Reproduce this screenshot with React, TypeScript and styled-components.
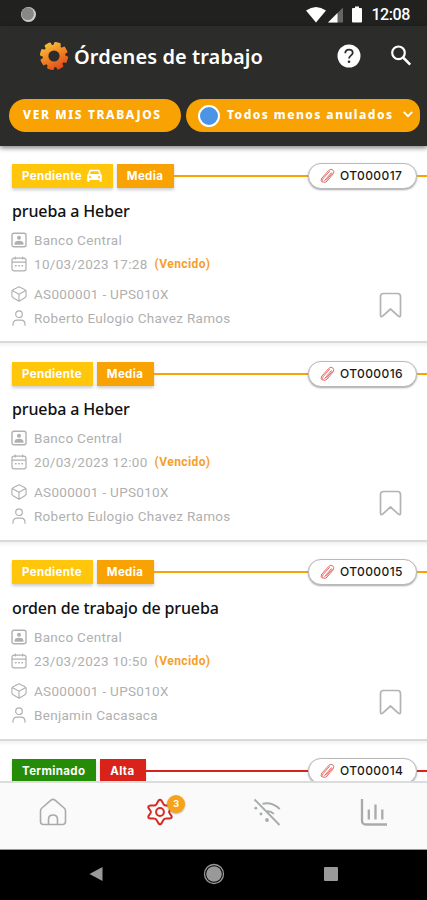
import React from "react";
import styled, { createGlobalStyle } from "styled-components";

const GlobalStyle = createGlobalStyle`
  * { box-sizing: border-box; }
  body { margin: 0; background: #fff; font-family: Roboto, sans-serif; }
  svg { display: block; flex: none; }
`;

const Screen = styled.div`
  width: 427px;
  height: 900px;
  display: flex;
  flex-direction: column;
  overflow: hidden;
  background: #fff;
`;

const StatusBar = styled.div`
  height: 26px;
  flex: none;
  background: #212120;
  display: flex;
  align-items: center;
  padding: 3px 17px 0 20px;
  color: #fff;
`;

const Clock = styled.span`
  margin-left: 8px;
  font: 500 16px/20px Roboto, sans-serif;
  letter-spacing: -0.4px;
`;

const Spacer = styled.div`
  flex: 1;
`;

const Header = styled.header`
  position: relative;
  z-index: 1;
  height: 120px;
  flex: none;
  background: #2c2c2a;
  box-shadow: 0 2px 5px rgba(0, 0, 0, 0.45);
`;

const TitleRow = styled.div`
  height: 60px;
  display: flex;
  align-items: center;
  padding: 0 14px 0 39px;
`;

const Title = styled.h1`
  margin: 2px 0 0 5px;
  color: #fff;
  font: 600 20px/28px "Noto Sans", sans-serif;
  letter-spacing: 0.08px;
  white-space: nowrap;
`;

const HeaderActions = styled.div`
  display: flex;
  align-items: center;
  gap: 28px;
`;

const FilterRow = styled.div`
  display: flex;
  gap: 5px;
  padding: 13px 7px 0 9px;
`;

const FilterButton = styled.button<{ $width: number; $heading?: boolean }>`
  width: ${(p) => p.$width}px;
  height: 33px;
  flex: none;
  display: flex;
  align-items: center;
  border: 0;
  border-radius: ${(p) => (p.$heading ? "17px" : "17px 14px 14px 17px")};
  background: #f9a203;
  color: #fff;
  padding: 0 ${(p) => (p.$heading ? 14 : 7)}px 2px ${(p) => (p.$heading ? 14 : 11)}px;
  font: 800 12px/16px "Noto Sans", sans-serif;
  letter-spacing: ${(p) => (p.$heading ? 1.6 : 1.45)}px;
  white-space: nowrap;
`;

const ColorDot = styled.i`
  width: 22px;
  height: 22px;
  flex: none;
  margin: 3px 7px 0 1px;
  border: 2px solid #fff;
  border-radius: 50%;
  background: #4b94e6;
`;

const List = styled.main`
  height: 635px;
  flex: none;
  overflow: hidden;
  background: #fff;
`;

const Card = styled.article`
  height: 198.6px;
  padding-top: 18px;
  border-bottom: 2px solid #d9d9d9;
  background: linear-gradient(#f2f2f2, #fff 5px);
  &:first-child {
    height: 197.4px;
    padding-top: 17px;
  }
`;

const TagRow = styled.div`
  height: 25px;
  display: flex;
  align-items: center;
  padding-left: 12px;
`;

const Tag = styled.span<{ $color: string; $gap?: number }>`
  height: 24px;
  display: flex;
  align-items: center;
  gap: 5px;
  padding: 0 11px 0 10px;
  margin-right: ${(p) => p.$gap ?? 0}px;
  background: ${(p) => p.$color};
  color: #fff;
  font: 700 11.5px/16px Inter, sans-serif;
  letter-spacing: 0.35px;
  box-shadow: 0 2px 3px rgba(0, 0, 0, 0.2);
`;

const Line = styled.div<{ $color: string; $end?: boolean }>`
  height: 2px;
  ${(p) => (p.$end ? "width: 10px;" : "flex: 1;")}
  background: ${(p) => p.$color};
`;

const OrderCode = styled.span`
  width: 109px;
  height: 26px;
  display: flex;
  align-items: center;
  gap: 5px;
  padding-left: 11px;
  border: 1px solid #b9b9b9;
  border-radius: 13px;
  background: #fff;
  box-shadow: 0 1px 2px rgba(0, 0, 0, 0.35);
  color: #191919;
  font: 500 12px/16px Inter, sans-serif;
  letter-spacing: 0.4px;
`;

const CardTitle = styled.h2`
  margin: 11px 12px 5px;
  color: #111;
  font: 500 16px/24px "Noto Sans", sans-serif;
  letter-spacing: -0.13px;
`;

const CardBody = styled.div`
  display: flex;
  justify-content: space-between;
  padding: 0 25px 0 11px;
`;

const Details = styled.div`
  display: flex;
  flex-direction: column;
`;

const DetailRow = styled.div<{ $after?: number }>`
  height: 24px;
  margin-bottom: ${(p) => p.$after ?? 0}px;
  display: flex;
  align-items: center;
  gap: 7px;
  color: #b0b0b0;
  font: 400 13.5px/20px Roboto, sans-serif;
  letter-spacing: 0.3px;
  white-space: nowrap;
`;

const Overdue = styled.b`
  color: #f6a02b;
  font: 700 12px/20px Roboto, sans-serif;
  letter-spacing: 0.4px;
`;

const BookmarkButton = styled.span`
  margin-top: 64px;
`;

const TabBar = styled.nav`
  height: 69px;
  flex: none;
  display: grid;
  grid-template-columns: repeat(4, 1fr);
  justify-items: center;
  padding-top: 15px;
  border-top: 2px solid #dcdcdc;
  border-bottom: 1px solid #999;
  background: #fafafa;
`;

const TabItem = styled.span`
  position: relative;
`;

const Badge = styled.span`
  position: absolute;
  left: 21px;
  top: -3px;
  width: 18px;
  height: 18px;
  border-radius: 50%;
  background: #f6a21b;
  color: #fff;
  box-shadow: 0 1px 2px rgba(0, 0, 0, 0.3);
  font: 700 9px/18px Inter, sans-serif;
  text-align: center;
`;

const SystemBar = styled.footer`
  height: 50px;
  flex: none;
  display: flex;
  justify-content: space-between;
  align-items: center;
  padding: 0 88px 2px;
  background: #000;
`;

type IconProps = { children: React.ReactNode; size?: number; color?: string; stroke?: number };

const StrokeIcon = ({ children, size = 16, color = "#b0b0b0", stroke = 1.4 }: IconProps) => (
  <svg width={size} height={size} viewBox="0 0 16 16" fill="none" stroke={color} strokeWidth={stroke} strokeLinecap="round" strokeLinejoin="round">
    {children}
  </svg>
);

const ContactIcon = () => (
  <StrokeIcon>
    <rect x="1" y="1.2" width="14" height="13.6" rx="2" />
    <circle cx="8" cy="5.8" r="2" fill="#b0b0b0" stroke="none" />
    <path d="M3.500 12.800v-1c0-2 1.500-3 4.500-3s4.500 1 4.500 3v1z" fill="#b0b0b0" stroke="none" />
  </StrokeIcon>
);

const CalendarIcon = () => (
  <StrokeIcon stroke={1.2}>
    <path d="M4.3 1v2M11.7 1v2M1 6.2h14M3 2.2h10a2 2 0 0 1 2 2v8.6a2 2 0 0 1-2 2H3a2 2 0 0 1-2-2V4.200a2 2 0 0 1 2-2z" />
    <path d="M4.500 9.800h.6M7.700 9.800h.6M10.900 9.800h.6" strokeWidth="1.4" />
  </StrokeIcon>
);

const BoxIcon = () => (
  <StrokeIcon stroke={1.1}>
    <path d="M8 .8l6 3 1.100 1.100v5.500L13.500 12 8 15.200 2.500 12 .9 10.400V4.900L2 3.800zM1.200 4.600L8 8.200l6.800-3.600M8 8.200v6.800" />
  </StrokeIcon>
);

const PersonIcon = () => (
  <StrokeIcon stroke={1.2}>
    <circle cx="8" cy="4.200" r="3.300" />
    <path d="M2 15.200v-.8c0-2.600 1.700-4.300 4-4.300h4c2.300 0 4 1.700 4 4.300v.8" />
  </StrokeIcon>
);

const BookmarkIcon = () => (
  <svg width="23" height="27" viewBox="0 0 23 27" fill="none" stroke="#b3b3b3" strokeWidth="1.700" strokeLinejoin="round">
    <path d="M1.500 4.500q0-3 3-3h14q3 0 3 3V23q0 2.300-1.900 1.300L11.500 17l-8.100 7.300Q1.500 25.300 1.500 23z" />
  </svg>
);

const ClipIcon = () => (
  <svg width="15" height="16" viewBox="0 0 15 16" fill="none" stroke="#e56c66" strokeWidth="1" strokeLinecap="round">
    <path d="M1.500 10.500L8.800 2.300q2.200-1.900 4-.4t.4 3.900L7 13.200q-2 2-3.800.8t.1-3.600l6.200-7M4.700 12.400l6.600-7.600M1.500 10.500q-1.500 2.700.8 3.800M6.300 12.200L12.200 5.300" />
  </svg>
);

const CarIcon = () => (
  <svg width="15" height="13" viewBox="0 0 15 13">
    <path fill="#fff" fillRule="evenodd" d="M3.500.8h8q1 0 1.300 1L14 5l.8 1.200V12q0 .7-.7.700h-.9q-.7 0-.7-.7v-1h-10v1q0 .7-.7.700H.9q-.7 0-.7-.7V6.200L1 5l1.200-3.200q.3-1 1.300-1zM3.800 2.200L2.900 5h9.200l-.9-2.800zM3 7a1.100 1.100 0 1 0 0 2.200A1.100 1.100 0 0 0 3 7m9 0a1.100 1.100 0 1 0 0 2.200A1.100 1.100 0 0 0 12 7" />
  </svg>
);

const teeth = [0, 45, 90, 135, 180, 225, 270, 315];

const LogoIcon = () => (
  <svg width="30" height="30" viewBox="0 0 30 30">
    <defs>
      <linearGradient id="gear" gradientUnits="userSpaceOnUse" x1="8" y1="3" x2="21" y2="28">
        <stop offset="0" stopColor="#f8bd35" />
        <stop offset="0.5" stopColor="#f08124" />
        <stop offset="1" stopColor="#e04b1c" />
      </linearGradient>
      <mask id="gearShape">
        <circle cx="15" cy="15" r="11.300" fill="#fff" />
        {teeth.map((a) => (
          <rect key={a} x="11.500" y="1" width="7" height="6" rx="1.500" fill="#fff" transform={`rotate(${a + 16} 15 15)`} />
        ))}
        <circle cx="15" cy="15" r="5.600" fill="#000" />
      </mask>
    </defs>
    <rect width="30" height="30" fill="url(#gear)" mask="url(#gearShape)" />
  </svg>
);

const HelpIcon = () => (
  <svg width="24" height="24" viewBox="0 0 24 24" fill="none">
    <circle cx="12" cy="12" r="11.500" fill="#fff" />
    <path d="M8.300 9.300q0-3.600 3.700-3.600t3.700 3.300c0 2.300-3.700 2.500-3.700 5.600" stroke="#2c2c2a" strokeWidth="1.800" />
    <circle cx="12" cy="17.800" r="1.300" fill="#2c2c2a" />
  </svg>
);

const SearchIcon = () => (
  <svg width="24" height="24" viewBox="0 0 24 24" fill="none" stroke="#fff" strokeWidth="2.200">
    <circle cx="9.500" cy="8.800" r="6.300" />
    <path d="M14 13.400l7.200 7.200" strokeWidth="2.700" />
  </svg>
);

const HomeIcon = () => (
  <svg width="28" height="28" viewBox="0 0 28 28" fill="none" stroke="#a9abab" strokeWidth="1.600" strokeLinejoin="round">
    <path d="M1.500 13q0-1.800 1.400-3l8.800-7.700q2.300-2 4.600 0l8.800 7.700q1.400 1.200 1.400 3v10.500q0 3-3 3h-19q-3 0-3-3zM9.500 26.500v-5q0-4.500 4.500-4.500t4.500 4.500v5" />
  </svg>
);

const SettingsIcon = () => (
  <svg width="28" height="28" viewBox="0 0 28 28" fill="none" stroke="#d52b25" strokeWidth="2" strokeLinejoin="round">
    <path d="M12.600 2.500Q14 .8 15.400 2.500L17.600 6.300Q18.500 7.500 20 7.500L24 7.600Q26.500 8.200 25.400 10.200L23.400 13Q22.700 14 23.400 15L25.400 17.800Q26.500 19.800 24 20.400L20 20.500Q18.500 20.500 17.600 21.700L15.400 25.500Q14 27.200 12.600 25.500L10.400 21.700Q9.500 20.500 8 20.500L4 20.400Q1.500 19.800 2.600 17.800L4.600 15Q5.300 14 4.600 13L2.600 10.200Q1.500 8.200 4 7.600L8 7.500Q9.500 7.500 10.400 6.300z" />
    <circle cx="14" cy="14" r="3.900" />
  </svg>
);

const OfflineIcon = () => (
  <svg width="28" height="28" viewBox="0 0 28 28" fill="none" stroke="#a9abab" strokeWidth="1.900">
    <path d="M1.500 1.500l25 25.500M9.500 5.800q9-2.200 17.300 5.200M14 13.300q4-.2 6.800 2.600" />
    <circle cx="2.800" cy="10.200" r="1.400" fill="#a9abab" stroke="none" />
    <circle cx="8" cy="16" r="1.400" fill="#a9abab" stroke="none" />
    <circle cx="14" cy="22" r="1.900" fill="#a9abab" stroke="none" />
  </svg>
);

const ChartIcon = () => (
  <svg width="28" height="28" viewBox="0 0 28 28" fill="none" stroke="#a9abab" strokeWidth="2.300">
    <path d="M2 1v21.500q0 4 4 4h21M8.800 21.500v-10M15.500 21.500v-15M22.300 21.500v-10" />
  </svg>
);

type Order = {
  code: string;
  title: string;
  date: string;
  person: string;
  status: string;
  priority: string;
  statusColor: string;
  priorityColor: string;
  travelling?: boolean;
};

const pending = { status: "Pendiente", priority: "Media", statusColor: "#ffc60b", priorityColor: "#f9a203" };

const orders: Order[] = [
  { ...pending, code: "OT000017", title: "prueba a Heber", date: "10/03/2023 17:28", person: "Roberto Eulogio Chavez Ramos", travelling: true },
  { ...pending, code: "OT000016", title: "prueba a Heber", date: "20/03/2023 12:00", person: "Roberto Eulogio Chavez Ramos" },
  { ...pending, code: "OT000015", title: "orden de trabajo de prueba", date: "23/03/2023 10:50", person: "Benjamin Cacasaca" },
  { code: "OT000014", title: "", date: "", person: "", status: "Terminado", priority: "Alta", statusColor: "#248c07", priorityColor: "#d92219" },
];

const OrderCard = ({ order }: { order: Order }) => (
  <Card>
    <TagRow>
      <Tag $color={order.statusColor} $gap={4}>
        {order.status}
        {order.travelling && <CarIcon />}
      </Tag>
      <Tag $color={order.priorityColor}>{order.priority}</Tag>
      <Line $color={order.priorityColor} />
      <OrderCode>
        <ClipIcon />
        {order.code}
      </OrderCode>
      <Line $color={order.priorityColor} $end />
    </TagRow>
    {order.title && (
      <>
        <CardTitle>{order.title}</CardTitle>
        <CardBody>
          <Details>
            <DetailRow><ContactIcon />Banco Central</DetailRow>
            <DetailRow $after={6}><CalendarIcon />{order.date}<Overdue>(Vencido)</Overdue></DetailRow>
            <DetailRow><BoxIcon />AS000001 - UPS010X</DetailRow>
            <DetailRow><PersonIcon />{order.person}</DetailRow>
          </Details>
          <BookmarkButton><BookmarkIcon /></BookmarkButton>
        </CardBody>
      </>
    )}
  </Card>
);

export default function App() {
  return (
    <>
      <GlobalStyle />
      <Screen>
        <StatusBar>
          <svg width="17" height="17" viewBox="0 0 17 17">
            <circle cx="8.500" cy="8.500" r="7.500" fill="#ccc" />
            <circle cx="7.700" cy="7.700" r="6.300" fill="#888" />
          </svg>
          <Spacer />
          <svg width="57" height="18" viewBox="0 0 57 18" fill="#fff">
            <path d="M0 4.500Q10 -2.500 20 4.500L10 16.500z" />
            <path d="M37 1.500v15H22z" fill="#666" />
            <path d="M31.500 7v9.500H22z" />
            <path d="M49 .5h4V2h2q1 0 1 1v12.500q0 1-1 1h-8q-1 0-1-1V3q0-1 1-1h2z" />
          </svg>
          <Clock>12:08</Clock>
        </StatusBar>
        <Header>
          <TitleRow>
            <LogoIcon />
            <Title>Órdenes de trabajo</Title>
            <Spacer />
            <HeaderActions>
              <HelpIcon />
              <SearchIcon />
            </HeaderActions>
          </TitleRow>
          <FilterRow>
            <FilterButton $width={172} $heading>VER MIS TRABAJOS</FilterButton>
            <FilterButton $width={234}>
              <ColorDot />
              Todos menos anulados
              <Spacer />
              <svg width="10" height="7" viewBox="0 0 10 7" fill="none" stroke="#fff" strokeWidth="1.800"><path d="M.8 1L5 5.200 9.200 1" /></svg>
            </FilterButton>
          </FilterRow>
        </Header>
        <List>
          {orders.map((order) => <OrderCard key={order.code} order={order} />)}
        </List>
        <TabBar>
          <TabItem><HomeIcon /></TabItem>
          <TabItem><SettingsIcon /><Badge>3</Badge></TabItem>
          <TabItem><OfflineIcon /></TabItem>
          <TabItem><ChartIcon /></TabItem>
        </TabBar>
        <SystemBar>
          <svg width="16" height="16" viewBox="0 0 16 16"><path d="M14.500 1v14L1.500 8z" fill="#999" /></svg>
          <svg width="22" height="22" viewBox="0 0 22 22"><circle cx="11" cy="11" r="9.500" fill="none" stroke="#999" strokeWidth="1.300" /><circle cx="11" cy="11" r="7.800" fill="#999" /></svg>
          <svg width="16" height="16" viewBox="0 0 16 16"><rect x="1" y="1" width="14" height="14" rx="1" fill="#999" /></svg>
        </SystemBar>
      </Screen>
    </>
  );
}
